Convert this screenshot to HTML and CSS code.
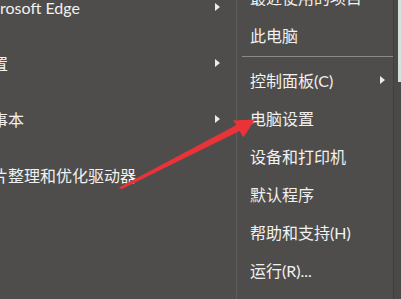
FILE: index.html
```html
<!DOCTYPE html>
<html lang="zh-CN">
<head>
<meta charset="utf-8">
<link rel="stylesheet" href="styles.css">
</head>
<body>
<div class="menu">
  <div class="left">
    <ul class="progs">
      <li class="row"><span class="label">rosoft Edge</span><span class="tri"></span></li>
      <li class="row"><span class="label cut">置</span><span class="tri"></span></li>
      <li class="row"><span class="label cut">事本</span><span class="tri"></span></li>
      <li class="row"><span class="label cut">片整理和优化驱动器</span></li>
    </ul>
  </div>
  <div class="sep"></div>
  <div class="right">
    <ul class="links">
      <li class="item">最近使用的项目</li>
      <li class="item">此电脑</li>
      <li class="divider"><span></span></li>
      <li class="item has-sub"><span>控制面板(C)</span><span class="tri"></span></li>
      <li class="item">电脑设置</li>
      <li class="item">设备和打印机</li>
      <li class="item">默认程序</li>
      <li class="item">帮助和支持(H)</li>
      <li class="item">运行(R)...</li>
    </ul>
  </div>
  <div class="edge">
    <div class="glow"></div>
  </div>
</div>
<svg class="pointer" width="401" height="299" viewBox="0 0 401 299">
  <polygon points="119,187.6 236.4,124.9 233,120.6 255,119.4 243.4,137.6 239.6,131 121.4,189.2" fill="#ea3339"/>
</svg>
</body>
</html>
```
FILE: styles.css
```css
html, body {
  margin: 0;
  padding: 0;
  width: 401px;
  height: 299px;
  overflow: hidden;
  background: #4f4d4b;
}
body {
  font-family: Lato, "Noto Sans CJK SC", sans-serif;
  font-size: 16px;
  color: #f1f1f1;
  position: relative;
}
ul {
  list-style: none;
  margin: 0;
  padding: 0;
}
.menu {
  display: flex;
  height: 299px;
}
.left {
  width: 236px;
  overflow: hidden;
}
.progs {
  margin-top: -21px;
}
.row {
  height: 56px;
  display: flex;
  align-items: center;
  justify-content: space-between;
  padding-right: 16px;
  white-space: nowrap;
}
.label.cut {
  margin-left: -8px;
}
.tri {
  width: 0;
  height: 0;
  border-left: 5px solid #ececec;
  border-top: 4px solid transparent;
  border-bottom: 4px solid transparent;
}
.sep {
  width: 1px;
  background: #5f5d5b;
}
.right {
  width: 156px;
  overflow: hidden;
}
.links {
  margin-top: -22px;
}
.item {
  height: 38px;
  display: flex;
  align-items: center;
  padding-left: 13px;
  padding-right: 8px;
  white-space: nowrap;
}
.has-sub {
  justify-content: space-between;
}
.divider {
  height: 7px;
  padding-top: 2px;
  box-sizing: border-box;
  padding-left: 5px;
}
.divider span {
  display: block;
  height: 1px;
  background: #8c8a88;
}
.edge {
  flex: 1;
  border-left: 1px solid #403e3c;
  background: #4b4947;
  display: flex;
  justify-content: flex-end;
}
.glow {
  width: 3px;
  height: 82px;
  background: #d3e2de;
}
.pointer {
  position: absolute;
  left: 0;
  top: 0;
}
```
